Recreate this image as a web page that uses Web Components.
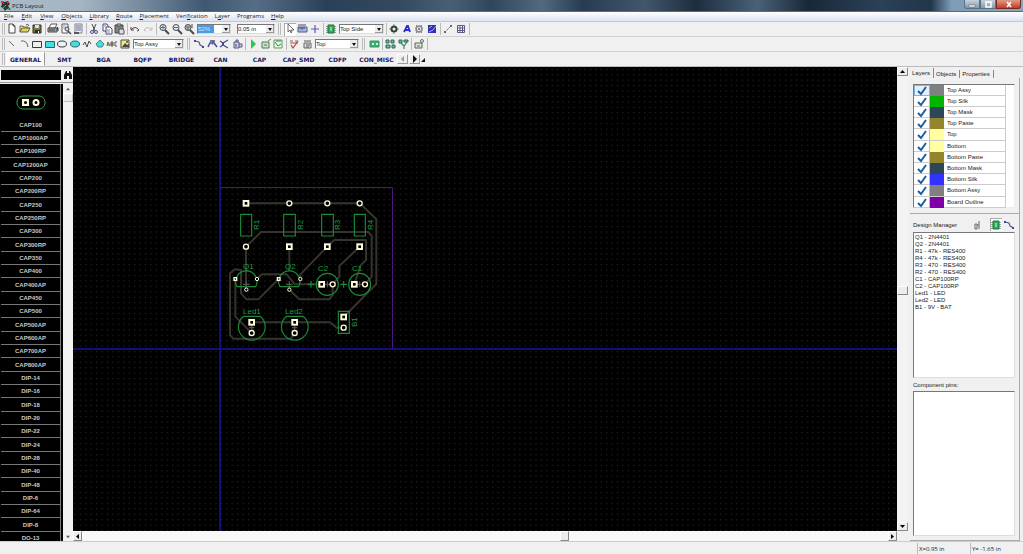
<!DOCTYPE html>
<html lang="en">
<head>
<meta charset="utf-8">
<title>PCB Layout</title>
<style>
html, body { height: 100%; margin: 0; }
body { overflow: hidden; background: #f0f0f0; color: #222; font: 6px/8px "Liberation Sans", Arial, sans-serif; }
</style>
</head>
<body>
<pcb-app></pcb-app>
<script>
const ICONS = {
  'new': '<path d="M3 1h4l2 2v7H3z" fill="#fff" stroke="#333"/><path d="M7 1v2h2" fill="none" stroke="#333"/>',
  open: '<path d="M1 9V3h3l1 1h4v2" fill="#f6e27a" stroke="#555"/><path d="M1 9l2-4h8L9 9z" fill="#e4d42a" stroke="#444"/><path d="M7 2q2-2 3 1" fill="none" stroke="#333"/>',
  save: '<path d="M2 2h8v8H2z" fill="#6b6b20" stroke="#111"/><path d="M4 2h4v3H4z" fill="#ddd"/><path d="M4 7h5v3H4z" fill="#111"/><path d="M7 8h1v2H7z" fill="#fff"/>',
  print: '<path d="M4 1h6L8 5H2z" fill="#fff" stroke="#444"/><path d="M1 5h9v4H1z" fill="#999" stroke="#333"/><path d="M2 7h6M10 4l1 1v3" stroke="#222"/>',
  preview: '<path d="M2 1h6v9H2z" fill="#fff" stroke="#444"/><path d="M3 3h3M3 5h2" stroke="#999"/><circle cx="7" cy="6" r="2" fill="#ccf" stroke="#333"/><path d="M8 8l3 3" stroke="#333" stroke-width="1.5"/>',
  report: '<path d="M3 1h7v9H3z" fill="#eee" stroke="#777"/><path d="M4 3h5M4 5h5M4 7h5" stroke="#559"/><path d="M2 9h5v2H2z" fill="#444"/>',
  cut: '<path d="M4 1l3 7M8 1L5 8" stroke="#333"/><circle cx="4" cy="9" r="1.5" fill="none" stroke="#338"/><circle cx="8" cy="9" r="1.5" fill="none" stroke="#338"/>',
  copy: '<path d="M2 1h4l1 2v5H2z" fill="#fff" stroke="#336"/><path d="M5 4h4l2 2v5H5z" fill="#fff" stroke="#336"/><path d="M6 7h3M6 9h3M3 3h2" stroke="#77a"/>',
  paste: '<path d="M2 2h8v8H2z" fill="#776" stroke="#333"/><path d="M4 1h4v2H4z" fill="#ccc" stroke="#333"/><path d="M6 6h4l1 1v4H6z" fill="#dde" stroke="#336"/>',
  undo: '<path d="M2 4v3h3M2 7q4-5 8 0-1 1-2 1" fill="none" stroke="#333"/>',
  redo: '<path d="M10 4v3H7M10 7q-4-5-8 0 1 1 2 1" fill="none" stroke="#bbb"/>',
  zoomin: '<circle cx="5" cy="4.500" r="3" fill="#def" stroke="#333"/><path d="M7 7l4 4" stroke="#333" stroke-width="2"/><path d="M3 4.500h4M5 2.500v4" stroke="#266"/>',
  zoomout: '<circle cx="5" cy="4.500" r="3" fill="#def" stroke="#333"/><path d="M7 7l4 4" stroke="#333" stroke-width="2"/><path d="M3 4.500h4" stroke="#266"/>',
  zoomfit: '<circle cx="5" cy="4.500" r="3" fill="#bcc" stroke="#333"/><path d="M7 7l4 4" stroke="#333" stroke-width="2"/><path d="M3 4h4M4 6h2M9 1v4" stroke="#333"/>',
  arrow: '<path d="M4 1v8l2-2 1 3 1-1-1-2h3z" fill="#fff" stroke="#333" stroke-width=".8"/>',
  measure: '<path d="M1 4h9v5H1z" fill="#8fb3dc" stroke="#447"/><path d="M3 4v2M5 4v3M7 4v2M1 2h8" stroke="#336"/>',
  origin: '<path d="M6 2v8M2 6h8" stroke="#44b" stroke-width="1.200"/>',
  chip: '<path d="M3 2h6v8H3z" fill="#15a53a" stroke="#153"/><path d="M2 3v7M10 3v7" stroke="#153" stroke-dasharray="1 1"/><path d="M5 4h2v4H5z" fill="#5d8"/>',
  pad: '<circle cx="6" cy="6" r="2.500" fill="none" stroke="#222" stroke-width="2"/><path d="M6 1v2M6 9v2M1 6h2M9 6h2" stroke="#2a2"/>',
  text: '<path d="M3 9l3-6h1l2 6M4 7h5" fill="none" stroke="#1414c8" stroke-width="1.800"/>',
  via: '<circle cx="6" cy="6" r="3" fill="#ddd" stroke="#777" stroke-width="1.500"/><circle cx="6" cy="6" r="1" fill="#555"/><path d="M3 2l1 1M9 2L8 3M3 10l1-1M9 10L8 9" stroke="#777"/>',
  pour: '<path d="M2 2h8v8H2z" fill="#1515b4"/><path d="M3 9l4-2 3-4M3 5l3-2" stroke="#aac" fill="none"/>',
  ruler: '<path d="M3 9l6-6" stroke="#555" stroke-dasharray="2 1"/><path d="M2 8h2v2H2zM8 2h2v2H8z" fill="#556"/>',
  grid: '<path d="M2.500 2.500h7v7h-7zM2 5h8M2 7.500h8M5 2v8M7.500 2v8" fill="#fff" stroke="#447"/>',
  line: '<path d="M3 3l5 5" stroke="#555"/>',
  arc: '<path d="M2 3q6-1 7 6" fill="none" stroke="#555"/>',
  rect: '<path d="M1.500 3.500h9v6h-9z" fill="none" stroke="#222"/>',
  rectf: '<path d="M1.500 3.500h9v6h-9z" fill="#2edbe0" stroke="#155"/>',
  oval: '<ellipse cx="6" cy="6" rx="4.500" ry="3" fill="none" stroke="#222"/>',
  ovalf: '<ellipse cx="6" cy="6" rx="4.500" ry="3" fill="#2edbe0" stroke="#155"/>',
  zig: '<path d="M2 7l2-3 2 5 2-6 2 3" fill="none" stroke="#333"/>',
  poly: '<path d="M6 2l4 4-2 3H4L2 6z" fill="#2edbe0" stroke="#377"/>',
  abc: '<path d="M1 8l1-4 2 4M2 7h1M5 8V4h2v2H5h2v2zM11 4H9v4h2" fill="none" stroke="#443"/>',
  image: '<path d="M2 2h8v8H2z" fill="#f2ee6a" stroke="#333"/><path d="M3 9l3-4 2 2 2-1v3z" fill="#333"/><circle cx="8" cy="4" r="1" fill="#333"/>',
  trace: '<path d="M2 3l4 1 1 3 4 2" fill="none" stroke="#448" stroke-width="1.200"/><path d="M1 2h2v2H1zM9 8h2v2H9z" fill="#338"/>',
  trace2: '<path d="M2 9l2-4h4l3 4M4 3h5" fill="none" stroke="#338" stroke-width="1.500"/><path d="M6 2l3 3-3 2" fill="#556"/>',
  trace3: '<path d="M2 9l3-2 5 3M2 3l3 2 5-3" fill="none" stroke="#338" stroke-width="1.200"/><path d="M4 5h2v2H4z" fill="#336"/>',
  lock: '<path d="M3 4h5v6H3zM5 4V2h2v2M8 6h3v3H8" fill="#ccd" stroke="#447"/><path d="M5 6v3" stroke="#338"/>',
  play: '<path d="M4 1l5 5-5 5z" fill="#12c236"/>',
  auto1: '<path d="M2 4h7v6H2z" fill="#cdc" stroke="#464"/><path d="M4 7h3M8 3l3-2" stroke="#283"/>',
  auto2: '<path d="M2 2h8v8H2z" fill="#dfd" stroke="#585"/><path d="M3 4l3 4 3-2M4 3h5" stroke="#274" fill="none"/>',
  check: '<path d="M2 3h3M7 3h3M2 5h8" stroke="#944"/><path d="M3 7l2 3 5-7" fill="none" stroke="#b22" stroke-width="1.200"/>',
  drc: '<path d="M3 5h7v5H3z" fill="#ddd" stroke="#555"/><path d="M3 3h7M5 7h4M5 9h3" stroke="#444"/>',
  board: '<path d="M2 3h9v6H2z" fill="#29a84a" stroke="#286"/><path d="M4 5h2v2H4zM8 5h2v2H8z" fill="#bfc"/>',
  place1: '<path d="M2 2h3v3H2zM7 2h3v3H7zM2 7h4v3H2zM8 7h3v3H8z" fill="#4b8" stroke="#254"/>',
  place2: '<path d="M2 2h3v3H2zM7 2h4v2H7z" fill="#4b8" stroke="#254"/><path d="M4 5l3 3 3-4M7 8v3" fill="none" stroke="#276" stroke-width="1.200"/>',
  place3: '<path d="M2 5h7v5H2z" fill="#ddd" stroke="#454"/><path d="M4 8h3" stroke="#363"/><circle cx="9" cy="3" r="1.500" fill="none" stroke="#273"/>',
  find: '<path d="M2 10V6l2-4h1v8zM10 10V6L8 2H7v8z" fill="#111"/><path d="M5 4h2v3H5z" fill="#111"/>',
  gate: '<path d="M3 5h2v5H3zM7 2v8M5 6h2" fill="none" stroke="#555"/>',
  logo: '<path d="M1 1l4 1 3-1 2 3-2 2 3 4-4-1-2 2-2-3-2-1 1-3z" fill="#333"/><path d="M2 2l2 2M7 3l2-1" stroke="#e44"/><path d="M3 8l3-3M8 8l1 2" stroke="#3b5"/>'
};

const define = (name, html, setup) => {
  const template = document.createElement('template');
  template.innerHTML = html;
  customElements.define(name, class extends HTMLElement {
    constructor() {
      super();
      this.attachShadow({ mode: 'open' }).append(template.content.cloneNode(true));
    }
    connectedCallback() {
      if (setup && !this.ready) {
        this.ready = true;
        setup(this, this.shadowRoot);
      }
    }
  });
};
const svg = name => `<svg viewBox="0 0 12 12" width="12" height="12" aria-hidden="true">${ICONS[name]}</svg>`;

define('pcb-icon', `<style>:host{display:block;width:12px;height:12px} svg{display:block}</style>`,
  (el, root) => { root.innerHTML += svg(el.getAttribute('name')); });

/* A run of icon buttons; the icons attribute lists their names. */
define('tool-group', `<style>
:host{display:grid;grid-auto-flow:column;grid-auto-columns:12px 13px;justify-items:center;align-items:center}
button{width:12px;height:13px;padding:0;border:0;background:none;display:block}
button.on{background:#fff;box-shadow:inset 1px 1px #aaa}
svg{display:block;opacity:.88}
</style>`, (el, root) => {
  const on = el.getAttribute('pressed');
  root.innerHTML += el.getAttribute('icons').split(' ')
    .map(n => `<button type="button" aria-label="${n}" class="${n === on ? 'on' : ''}">${svg(n)}</button>`).join('');
});

define('tool-sep', `<style>:host{display:block;width:1px;height:12px;margin:0 1px 0 2px;background:#bbb}</style>`);
define('tool-grip', `<style>:host{display:block;width:1px;height:12px;border:solid #bbb;border-width:0 1px;margin:0 1px}</style>`);

define('tool-select', `<style>
:host{display:grid;height:10px;border:1px solid;border-color:#777 #ddd #ddd #777;box-sizing:border-box;background:#fff}
select,i{grid-area:1/1}
select{appearance:none;width:100%;height:8px;box-sizing:border-box;border:0;border-radius:0;padding:0 8px 0 0;margin:0;background:none;color:#222;font:6px/8px "Liberation Sans",sans-serif;outline:0}
:host([active]) select{background:linear-gradient(90deg,#4a9ae8 0 16px,#fff 16px);color:#cfe8ff}
i{justify-self:end;width:8px;height:8px;background:#ececec;display:grid;place-items:center;pointer-events:none;box-shadow:inset -1px -1px #999}
i::before{content:"";border:2px solid transparent;border-top:3px solid #111;border-bottom:0}
</style><select></select><i></i>`, (el, root) => {
  const s = root.querySelector('select');
  s.setAttribute('aria-label', el.getAttribute('label'));
  s.innerHTML = `<option>${el.getAttribute('value')}</option>`;
});

define('title-bar', `<style>
:host{display:flex;align-items:center;height:12px;box-sizing:border-box;border-bottom:1px solid #667;color:#1c2026;
background:linear-gradient(90deg,#a9bac9 0,#a4b4c2 8%,#75899c 14%,#3f5871 20%,#566e85 25%,#2a4058 32%,#34495f 39%,#486076 44%,#2f465d 48%,#52697e 53%,#273c52 57%,#42576b 63%,#1d2d3e 68%,#4a6177 74%,#192838 79%,#2b4156 86%,#22364a 91%,#7f9bb5 93%,#8ba4ba 100%)}
span{flex:1;font:6px/10px "Open Sans",sans-serif}
nav{display:flex;align-self:start;margin-right:2px}
button{display:grid;place-items:center;width:16px;height:9px;padding:0;border:1px solid #5b6f83;border-top:0;background:linear-gradient(#c5d2de,#8698aa);box-sizing:border-box}
button:last-child{width:25px;background:linear-gradient(#e09a88,#c43c22);border-color:#7a2a1d}
button:first-child{border-radius:0 0 0 3px} button:last-child{border-radius:0 0 3px 0}
svg{display:block;width:8px;height:7px}
</style>
<pcb-icon name="logo"></pcb-icon><span>PCB Layout</span>
<nav><button aria-label="Minimize"><svg viewBox="0 0 8 7"><path d="M1 4h6v2H1z" fill="#fff" stroke="#556" stroke-width=".5"/></svg></button>
<button aria-label="Restore"><svg viewBox="0 0 8 7"><path d="M2 1h5v5H2z" fill="none" stroke="#fff" stroke-width="1.500"/></svg></button>
<button aria-label="Close"><svg viewBox="0 0 8 7"><path d="M2 1l4 5M6 1L2 6" stroke="#fff" stroke-width="1.500"/></svg></button></nav>`);

define('menu-bar', `<style>
:host{display:flex;gap:7px;height:10px;box-sizing:border-box;padding-left:4px;background:linear-gradient(#fff,#dde2f1);border-bottom:1px solid #c4c8d2}
button{border:0;background:none;padding:0;color:#1c1c1c;font:6px/9px "Open Sans",sans-serif}
button:nth-child(n+3){margin-left:1px}
button:nth-child(n+6){margin-left:0}
</style>
<button><u>F</u>ile</button><button><u>E</u>dit</button><button><u>V</u>iew</button><button><u>O</u>bjects</button><button><u>L</u>ibrary</button><button><u>R</u>oute</button><button><u>P</u>lacement</button><button>Veri<u>f</u>ication</button><button>L<u>a</u>yer</button><button>Programs</button><button><u>H</u>elp</button>`);

define('tool-bar', `<style>:host{display:flex;align-items:center;height:15px;box-sizing:border-box;padding-left:1px;border-bottom:1px solid #d2d2d2}</style><slot></slot>`);

define('category-tabs', `<style>
:host{display:flex;align-items:center;height:15px;padding-left:1px;border-bottom:1px solid #bbb;box-sizing:border-box}
button{width:39px;height:14px;box-sizing:border-box;padding:0;border:0;background:none;color:#16165e;font:bold 6px/13px "DejaVu Sans",sans-serif;text-align:center;white-space:nowrap}
button.on{background:#fafafa;border:1px solid;border-color:#fff #999 #fafafa #fff}
button.nav{width:11px;height:10px;margin-left:1px;border:1px solid;border-color:#fff #999 #999 #fff;background:#eee;display:grid;place-items:center}
svg{display:block}
</style><tool-grip></tool-grip>
<button class="on">GENERAL</button><button>SMT</button><button>BGA</button><button>BQFP</button><button>BRIDGE</button><button>CAN</button><button>CAP</button><button>CAP_SMD</button><button>CDFP</button><button>CON_MISC</button>
<button class="nav" aria-label="Previous"><svg width="8" height="8"><path d="M5 1v6L2 4z" fill="#999"/></svg></button><button class="nav" aria-label="Next"><svg width="8" height="8"><path d="M2 0v8l4-4z" fill="#111"/></svg></button><svg width="6" height="8"><path d="M5 3v4H1z" fill="#111"/></svg>`);

/* Scrollbar with arrows at its ends; pos is the thumb's place in percent. */
define('scroll-strip', `<style>
:host{display:flex;flex-direction:column;align-items:stretch;background:#f3f3f3}
:host([across]){flex-direction:row;background:#f8f8f8}
b{flex:none;width:100%;height:9px;box-sizing:border-box;background:#ececec;border:1px solid;border-color:#fff #888 #888 #fff;display:grid;place-items:center}
:host([across]) b{width:9px;height:100%}
u{display:block;flex:var(--pos) 1 0px} s{display:block;flex:calc(100 - var(--pos)) 1 0px}
svg{display:block;width:5px;height:5px}
:host([across]) svg{transform:rotate(-90deg)}
:host([flat]) b{border-color:#fff #bbb #bbb #fff}
:host([flat]) b.end{border-color:transparent;background:none}
:host([flat]) svg{width:4px;height:4px;opacity:.6}
</style><b class="end"><svg viewBox="0 0 5 5"><path d="M0 4h5L2.500 1z"/></svg></b><u></u><b></b><s></s><b class="end"><svg viewBox="0 0 5 5"><path d="M0 1h5L2.500 4z"/></svg></b>`,
  (el) => el.style.setProperty('--pos', el.getAttribute('pos')));

define('library-panel', `<style>
:host{display:flex;flex-direction:column;width:73px;min-height:0}
.find{display:flex;align-items:center;height:15px;gap:1px;border-bottom:1px solid #999}
input{width:60px;height:10px;margin:0 0 0 1px;padding:0;border:0;box-sizing:border-box;background:#000;color:#ddd;font:6px/10px "Liberation Sans",sans-serif}
.find button{border:0;padding:0;background:none;width:12px}
.body{flex:1;display:flex;min-height:0;margin-top:1px}
ul{flex:1;margin:0;padding:0 2px 0 1px;list-style:none;background:#000;overflow:hidden;display:grid;grid-template-rows:48px;grid-auto-rows:13px 13px 14px;color:#c8c8c8;font:bold 6px/12px "Liberation Sans",sans-serif;text-align:center}
li{border:solid #777;border-width:0 1px 1px 0;display:flex;flex-direction:column;justify-content:end;box-sizing:border-box}
li svg{display:block;margin:0 auto 9px}
scroll-strip{width:10px}
</style>
<div class="find"><input aria-label="Find part"><button aria-label="Find"><pcb-icon name="find"></pcb-icon></button></div>
<div class="body"><ul></ul><scroll-strip flat pos="0"></scroll-strip></div>`, (el, root) => {
  const names = 'CAP100 CAP1000AP CAP100RP CAP1200AP CAP200 CAP200RP CAP250 CAP250RP CAP300 CAP300RP CAP350 CAP400 CAP400AP CAP450 CAP500 CAP500AP CAP600AP CAP700AP CAP800AP DIP-14 DIP-16 DIP-18 DIP-20 DIP-22 DIP-24 DIP-28 DIP-40 DIP-48 DIP-6 DIP-64 DIP-8 DO-13'.split(' ');
  const preview = '<svg width="30" height="15" viewBox="0 0 30 15"><rect x="1" y="1" width="28" height="13" rx="6" fill="none" stroke="#3f9a4c"/><path d="M6 4h7v7H6z" fill="#fffbe0"/><circle cx="9.500" cy="7.500" r="1.500"/><circle cx="20" cy="7.500" r="2.500" fill="none" stroke="#fffbe0" stroke-width="2"/></svg>';
  root.querySelector('ul').innerHTML = names.map((n, i) => `<li>${i ? '' : preview}${n}</li>`).join('');
});

define('board-canvas', `<style>
:host{display:grid;grid-template:minmax(0,1fr) 10px / minmax(0,1fr) 11px;min-width:0;min-height:0}
svg{display:block;width:100%;height:100%;background:#000}
text{font:8px "Liberation Sans",sans-serif;fill:#1f9a45}
</style>
<svg role="img" aria-label="Board">
<defs><pattern id="dots" width="5.425" height="5.425" patternUnits="userSpaceOnUse" x="146" y="282"><rect x="2" y="2" width="1" height="1" fill="#363636"/></pattern></defs>
<rect width="100%" height="100%" fill="url(#dots)"/>
<path d="M146.500 120.500H319.500V282" fill="none" stroke="#4c1780"/>
<rect x="146" y="0" width="2" height="100%" fill="#130f78"/><rect x="0" y="281" width="100%" height="2" fill="#130f78"/>
<g transform="translate(142 113) scale(.333333)" fill="none">
<g stroke="#37342d" stroke-width="6" stroke-linejoin="round">
<path d="M93 70H434L484 118V312L386 411M93 329V200L138 156H460L470 168V290L450 313M223 200V270M337 200L256 283V297M337 200L357 180H453V240L436 257L418 313M434 200L373 258V290L353 313M126 297L140 283H215L240 313H320M191 297L130 358H95L78 340V270L60 268L45 280V465L55 476H228L239 459M61 297V410L110 459M223 329L253 358H343L353 345V313M110 427H345L365 443H386"/></g>
<g stroke="#1b8a38" stroke-width="3.500">
<path d="M77 103h33v65H77zM206 103h35v65h-35zM320 103h35v65h-35zM418 103h33v65h-33zM370 394h33v66h-33z"/>
<path d="M66 320A32 32 0 1 1 122 320ZM195 320A32 32 0 1 1 251 320Z"/>
<circle cx="337" cy="313" r="33"/><circle cx="434" cy="313" r="33"/>
<path d="M278 313h20M288 303v20M376 313h20M386 303v20"/>
<path d="M86 409H135A40 40 0 1 1 86 409ZM215 409H264A40 40 0 1 1 215 409Z"/>
<path d="M84 313h20M94 303v20M213 313h20M223 303v20M328 313h18M337 304v18M425 313h18M434 304v18M102 443h16M110 435v16M231 443h16M239 435v16" stroke="#555"/></g>
<g stroke="#fffbdc" stroke-width="6" fill="#000" id="pads"></g>
</g>
<g>
<text x="170" y="202">Q1</text><text x="212" y="202">Q2</text><text x="245" y="204">C2</text><text x="279" y="204">C1</text>
<text x="170" y="247">Led1</text><text x="212" y="247">Led2</text>
<text transform="translate(186 163) rotate(-90)">R1</text><text transform="translate(230 163) rotate(-90)">R2</text><text transform="translate(267 163) rotate(-90)">R3</text><text transform="translate(300 163) rotate(-90)">R4</text><text transform="translate(284 260) rotate(-90)">B1</text>
</g></svg>
<scroll-strip pos="48"></scroll-strip><scroll-strip across pos="60"></scroll-strip>`, (el, root) => {
  const square = [[93,70],[223,200],[337,200],[434,200],[320,313],[418,313],[386,411],[110,427],[239,427]];
  const round = [[223,70],[337,70],[434,70],[93,200],[353,313],[450,313],[386,443],[110,459],[239,459]];
  const smallSquare = [[61,297],[191,297]];
  const smallRound = [[126,297],[94,329],[256,297],[223,329]];
  root.querySelector('#pads').innerHTML =
    square.map(([x, y]) => `<rect x="${x - 7}" y="${y - 7}" width="14" height="14"/>`).join('') +
    round.map(([x, y]) => `<circle cx="${x}" cy="${y}" r="7.500" stroke-width="4"/>`).join('') +
    smallSquare.map(([x, y]) => `<rect x="${x - 4}" y="${y - 4}" width="8" height="8" stroke-width="4"/>`).join('') +
    smallRound.map(([x, y]) => `<circle cx="${x}" cy="${y}" r="5" stroke-width="3"/>`).join('');
});

define('layer-row', `<style>
:host{display:block}
label{display:grid;grid-template-columns:16px 15px 1fr;height:100%;align-items:stretch;border-bottom:1px solid #ccc;box-sizing:border-box}
input,.tick{grid-area:1/1}
input{appearance:none;margin:0;width:100%;height:100%;border-right:1px solid #bbb;box-sizing:border-box}
:host([current]) input{background:#e2f1fd;border:1px solid #7ab6e0}
.tick{place-self:center;width:10px;height:10px;pointer-events:none}
input:not(:checked)+.tick{visibility:hidden}
i{margin:0 1px 0 0;background:var(--swatch)}
span{padding-left:2px;line-height:11px;white-space:nowrap}
</style><label><input type="checkbox" checked><svg class="tick" viewBox="0 0 10 10"><path d="M1 5l3 3 5-7" fill="none" stroke="#1f5f9e" stroke-width="2"/></svg><i></i><span><slot></slot></span></label>`,
  el => el.style.setProperty('--swatch', el.getAttribute('color')));

define('side-panel', `<style>
:host{display:flex;flex-direction:column;width:115px;min-height:0;box-sizing:border-box;padding:1px 3px 0 2px;color:#222}
nav{display:flex;height:10px}
nav button{border:0;border-right:1px solid #888;padding:0 3px 0 2px;margin:2px 0 0;height:8px;background:none;font:6px/7px "Liberation Sans",sans-serif;color:#222}
nav button.on{margin-top:0;height:10px}
section{border:solid #aaa;border-width:0 1px 1px 0;padding:6px 4px 5px 3px}
.layers{border:1px solid;border-color:#777 #eee #eee #777;background:#fff;height:122px;display:grid;grid-template-columns:92px;grid-auto-rows:11px 11px 11px 11px 12px}
layer-row{border-right:1px solid #ccc}
.lower{flex:1;display:flex;flex-direction:column;min-height:0;box-sizing:border-box;padding:3px 4px 4px 3px}
header{display:flex;align-items:center;height:15px}
h2{flex:1;margin:0;font:6px/8px "Liberation Sans",sans-serif}
h2.pins{flex:none;height:10px;padding-top:3px}
header tool-group+tool-group{margin-left:6px}
ul{flex:1;margin:0;padding:1px;list-style:none;border:1px solid;border-color:#777 #ddd #ddd #777;background:#fff;font:6px/7px "Liberation Sans",sans-serif;overflow:hidden;white-space:nowrap}
</style>
<nav><button class="on">Layers</button><button>Objects</button><button>Properties</button></nav>
<section><div class="layers">
<layer-row current color="#808080">Top Assy</layer-row><layer-row color="#00b400">Top Silk</layer-row><layer-row color="#2c4858">Top Mask</layer-row><layer-row color="#94842c">Top Paste</layer-row><layer-row color="#ffffa0">Top</layer-row><layer-row color="#ffffa0">Bottom</layer-row><layer-row color="#94842c">Bottom Paste</layer-row><layer-row color="#2c4858">Bottom Mask</layer-row><layer-row color="#3232ff">Bottom Silk</layer-row><layer-row color="#808080">Bottom Assy</layer-row><layer-row color="#8000a8">Board Outline</layer-row>
</div></section>
<section class="lower">
<header><h2>Design Manager</h2><tool-group icons="gate"></tool-group><tool-group icons="chip trace" pressed="chip"></tool-group></header>
<ul><li>Q1 - 2N4401</li><li>Q2 - 2N4401</li><li>R1 - 47k - RES400</li><li>R4 - 47k - RES400</li><li>R3 - 470 - RES400</li><li>R2 - 470 - RES400</li><li>C1 - CAP100RP</li><li>C2 - CAP100RP</li><li>Led1 - LED</li><li>Led2 - LED</li><li>B1 - 9V - BAT</li></ul>
<h2 class="pins">Component pins:</h2><ul></ul></section>`);

define('status-bar', `<style>
:host{display:flex;justify-content:end;height:13px;box-sizing:border-box;border-top:1px solid #ccc;padding-top:1px;font:6px/12px "Open Sans",sans-serif}
span{width:53px;box-sizing:border-box;border-left:1px solid #bbb;padding-left:1px}
</style><span>X=0.95 in</span><span>Y= -1.65 in</span>`);

define('pcb-app', `<style>
:host{display:flex;flex-direction:column;height:100vh;background:#f0f0f0}
title-bar,menu-bar,tool-bar,category-tabs,status-bar{flex:none}
main{flex:1;display:grid;grid-template-columns:73px minmax(0,1fr) 115px;min-height:0}
.w34{width:34px}.w38{width:38px}.w45{width:45px}.w51{width:51px}.w44{width:44px}
.near{margin-left:2px}.far{margin-left:6px}
tool-grip.mid{margin:0 3px}
</style>
<title-bar></title-bar><menu-bar></menu-bar>
<tool-bar><tool-grip></tool-grip><tool-group icons="new open save"></tool-group><tool-sep></tool-sep><tool-group icons="print preview report"></tool-group><tool-sep></tool-sep><tool-group icons="cut copy paste"></tool-group><tool-sep></tool-sep><tool-group icons="undo redo"></tool-group><tool-sep></tool-sep><tool-group icons="zoomin zoomout zoomfit"></tool-group><tool-select class="w34 near" active label="Zoom" value="52%"></tool-select><tool-select class="w38 far" label="Grid" value="0.05 in"></tool-select><tool-grip class="mid"></tool-grip><tool-group icons="arrow measure origin" pressed="arrow"></tool-group><tool-sep></tool-sep><tool-group icons="chip"></tool-group><tool-select class="w45 near" label="Side" value="Top Side"></tool-select><tool-sep></tool-sep><tool-group icons="pad text via pour"></tool-group><tool-sep></tool-sep><tool-group icons="ruler grid"></tool-group><tool-sep></tool-sep></tool-bar>
<tool-bar><tool-grip></tool-grip><tool-group icons="line arc rect rectf oval ovalf zig poly abc image"></tool-group><tool-select class="w51 near" label="Layer" value="Top Assy"></tool-select><tool-grip class="mid"></tool-grip><tool-group icons="trace trace2 trace3 lock"></tool-group><tool-sep></tool-sep><tool-group icons="play auto1 auto2"></tool-group><tool-sep></tool-sep><tool-group icons="check drc"></tool-group><tool-select class="w44 near" label="Signal layer" value="Top"></tool-select><tool-grip class="mid"></tool-grip><tool-group icons="board"></tool-group><tool-sep></tool-sep><tool-group icons="place1 place2"></tool-group><tool-sep></tool-sep><tool-group icons="place3"></tool-group><tool-sep></tool-sep></tool-bar>
<category-tabs></category-tabs>
<main><library-panel></library-panel><board-canvas></board-canvas><side-panel></side-panel></main>
<status-bar></status-bar>`);
</script>
</body>
</html>
